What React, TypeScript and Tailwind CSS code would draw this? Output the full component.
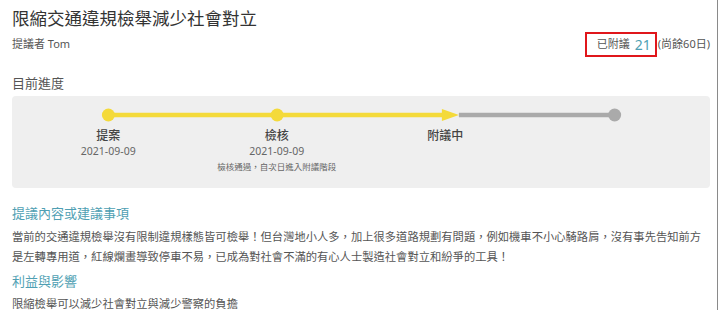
import React from "react";

const steps = [
    { label: "提案", date: "2021-09-09", note: "" },
    { label: "檢核", date: "2021-09-09", note: "檢核通過，自次日進入附議階段" },
    { label: "附議中", date: "", note: "" },
    { label: "", date: "", note: "" },
];

function Track() {
    const c = (i: number) => 84.4 + i * 168.75;
    return (
        <svg width="675" height="14" viewBox="0 0 675 14" className="block">
            <line x1={c(2) + 13} y1="7" x2={c(3)} y2="7" stroke="#aaaaaa" strokeWidth="4.5" />
            <line x1={c(0)} y1="7" x2={c(2) - 3} y2="7" stroke="#f4da3a" strokeWidth="4.5" />
            <polygon points={`${c(2) - 4},1 ${c(2) + 13},7 ${c(2) - 4},13`} fill="#f4da3a" />
            <circle cx={c(0)} cy="7" r="6.5" fill="#f4da3a" />
            <circle cx={c(1)} cy="7" r="6.5" fill="#f4da3a" />
            <circle cx={c(3)} cy="7" r="6.5" fill="#aaaaaa" />
        </svg>
    );
}

export default function App() {
    return (
        <div className="w-[718px] h-[310px] bg-white border-r border-[#8a8a8a] font-['Noto_Sans','Noto_Sans_CJK_TC',sans-serif] text-[#555] overflow-hidden">
            <div className="pl-3 pr-[7px] pt-[5px]">
                {/* Title */}
                <h1 className="text-[17.5px] leading-[26px] text-[#333]">限縮交通違規檢舉減少社會對立</h1>

                {/* Proposer + endorsements */}
                <div className="flex items-center justify-between h-[25px] mt-[1px]">
                    <span className="text-[11px]">提議者 Tom</span>
                    <div className="flex items-center text-[11px]">
                        <span className="flex items-center h-[25px] border-2 border-[#e0161b] pl-[10px] pr-[4px]">
                            已附議<span className="ml-[5px] text-[14px] text-[#4f9fb3]">21</span>
                        </span>
                        <span className="ml-[1px]">(尚餘60日)</span>
                    </div>
                </div>

                {/* Progress */}
                <div className="mt-[16px] text-[13px] leading-[20px]">目前進度</div>
                <div className="mt-[3px] rounded bg-[#efefef] px-3 pt-3 pb-[14px]">
                    <Track />
                    <div className="grid grid-cols-4 mt-[6px]">
                        {steps.map((s, i) => (
                            <div key={i} className="flex flex-col items-center">
                                <span className="text-[12px] leading-[16px] font-medium text-[#444]">{s.label}</span>
                                {s.date && <span className="text-[10.5px] leading-[15px] text-[#666]">{s.date}</span>}
                                {s.note && <span className="text-[8.5px] leading-[14px] mt-[1px] text-[#666]">{s.note}</span>}
                            </div>
                        ))}
                    </div>
                </div>

                {/* Content */}
                <h2 className="mt-[15px] text-[13px] leading-[20px] text-[#4f9fb3]">提議內容或建議事項</h2>
                <p className="mt-[4px] text-[11.3px] leading-[20px]">
                    當前的交通違規檢舉沒有限制違規樣態皆可檢舉！但台灣地小人多，加上很多道路規劃有問題，例如機車不小心騎路肩，沒有事先告知前方是左轉專用道，紅線爛畫導致停車不易，已成為對社會不滿的有心人士製造社會對立和紛爭的工具！
                </p>
                <h2 className="mt-[4px] text-[13px] leading-[20px] text-[#4f9fb3]">利益與影響</h2>
                <p className="mt-[3px] text-[11.3px] leading-[20px]">限縮檢舉可以減少社會對立與減少警察的負擔</p>
            </div>
        </div>
    );
}
